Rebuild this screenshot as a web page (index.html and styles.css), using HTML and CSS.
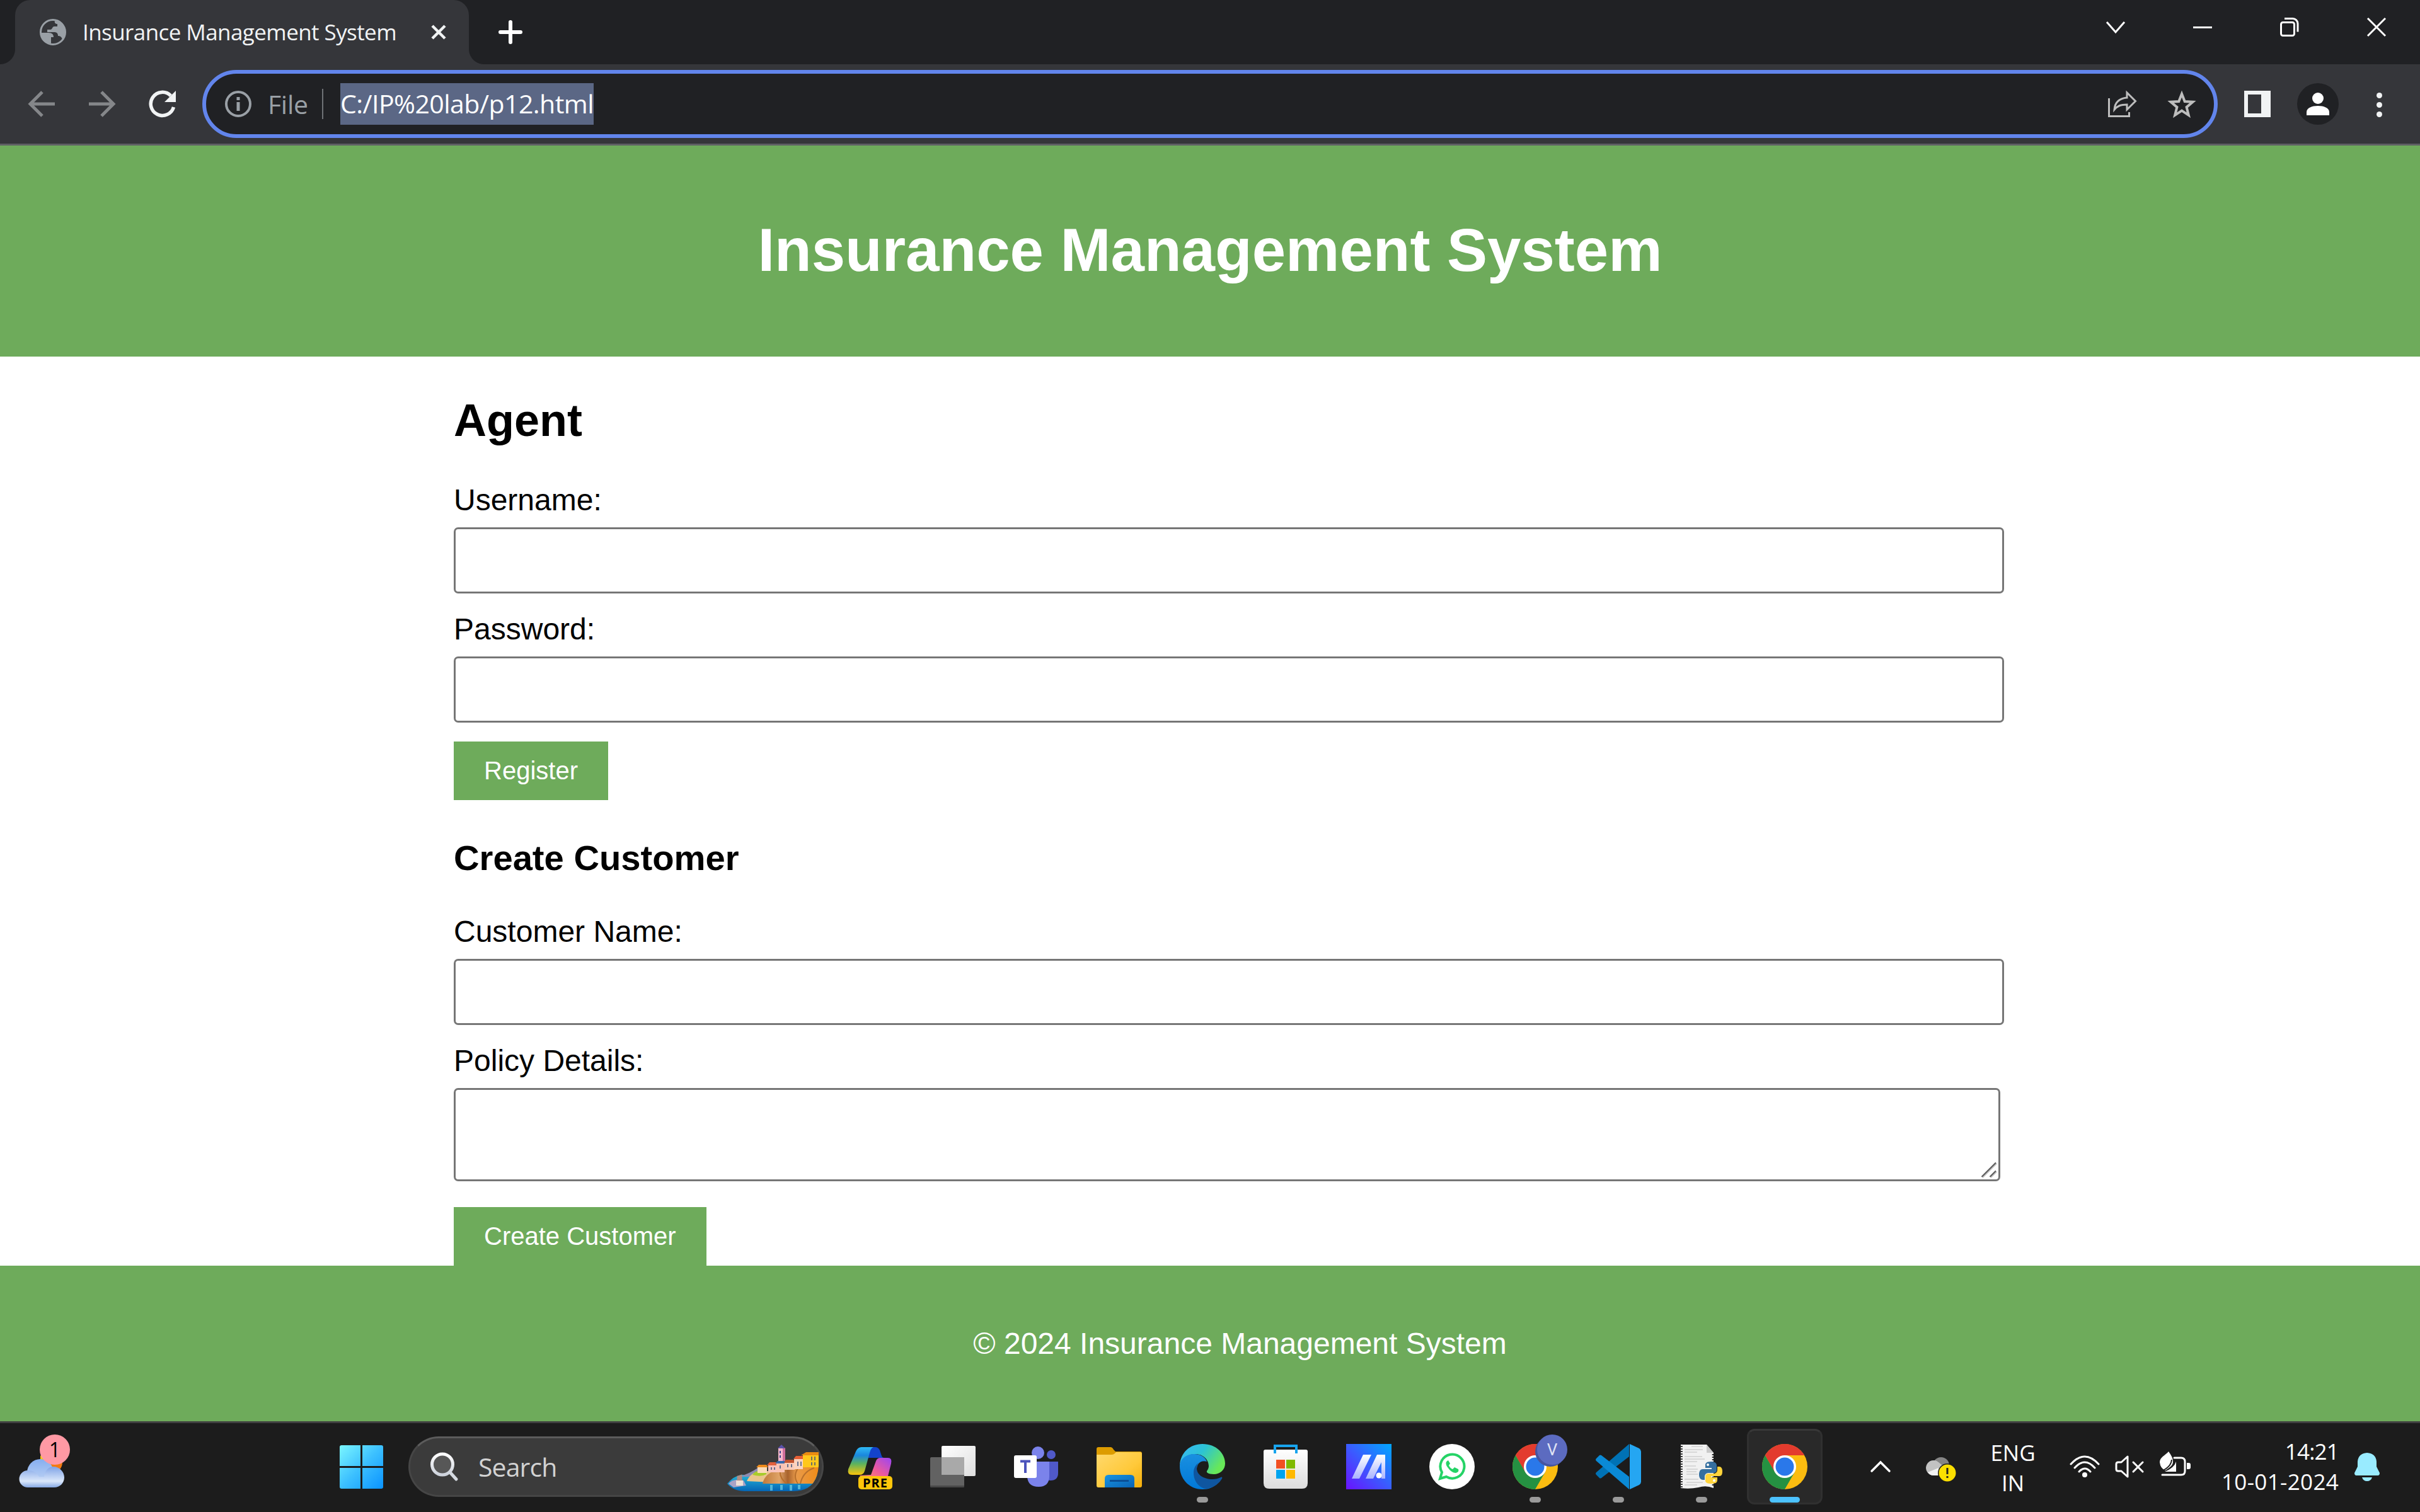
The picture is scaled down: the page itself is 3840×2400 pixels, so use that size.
FILE: index.html
```html
<!DOCTYPE html>
<html lang="en">
<head>
<meta charset="utf-8">
<title>Insurance Management System</title>
<link rel="stylesheet" href="styles.css">
</head>
<body>
<div class="screen">

  <div class="tabstrip">
    <div class="tab">
      <svg class="favicon" viewBox="0 0 42 42"><circle cx="21" cy="21" r="19.5" fill="#35363a" stroke="#9aa0a6" stroke-width="3"/><path d="M24 3C34 4 40 12 40 21c0 6-2 10-4 12-1-5-4-6-7-6 0-4-2-6-6-6H12v-4h5c3 0 3-5 6-5h5V8c-3 0-5-2-4-5z" fill="#9aa0a6"/><path d="M2 22h12c6 0 8 3 8 7h-4v10C8 38 2 31 2 22z" fill="#9aa0a6"/></svg>
      <span class="tab-title">Insurance Management System</span>
      <svg class="tab-close" viewBox="0 0 24 24"><path d="M2 2l20 20M22 2L2 22" stroke="#f1f3f4" stroke-width="4.500"/></svg>
    </div>
    <svg class="new-tab" viewBox="0 0 36 36"><path d="M18 2v32M2 18h32" stroke="#fff" stroke-width="6" stroke-linecap="round"/></svg>
    <div class="window-controls">
      <svg viewBox="0 0 30 30"><path d="M1 7l14 16L29 7" /></svg>
      <svg viewBox="0 0 30 30"><path d="M0 15.5h30"/></svg>
      <svg viewBox="0 0 30 30"><rect x="1.5" y="7.500" width="21" height="21" rx="3"/><path d="M7 1.500h13a8 8 0 0 1 8 8v13"/></svg>
      <svg viewBox="0 0 30 30"><path d="M1 1l28 28M29 1L1 29"/></svg>
    </div>
  </div>

  <div class="toolbar">
    <div class="nav">
      <svg viewBox="0 0 42 42"><path d="M42 21H4M22 2L3 21l19 19" stroke="#85878a" stroke-width="5"/></svg>
      <svg viewBox="0 0 42 42"><path d="M0 21h38M20 2l19 19-19 19" stroke="#85878a" stroke-width="5"/></svg>
      <svg viewBox="0 0 42 42"><path d="M38.500 26A18.500 18.500 0 1 1 34 8" stroke="#f1f3f4" stroke-width="5.500"/><path d="M42 0v18H24z" fill="#f1f3f4"/></svg>
    </div>
    <div class="omnibox">
      <svg class="info" viewBox="0 0 42 42"><circle cx="21" cy="21" r="19" stroke="#9aa0a6" stroke-width="4"/><path d="M21 18v14M21 10v5" stroke="#9aa0a6" stroke-width="5"/></svg>
      <span class="scheme">File</span>
      <span class="url">C:/IP%20lab/p12.html</span>
      <svg class="share" viewBox="0 0 45 42"><path d="M1.500 12v28.500h32V34" stroke="#bdbdbd" stroke-width="3"/><path d="M30 3l13.500 13.500L30 30v-8c-10 0-15 2-20 8 1-12 8-18 20-19z" stroke="#bdbdbd" stroke-width="3"/></svg>
      <svg class="star" viewBox="0 0 44 43"><path d="M22 5l4.700 12 12.800.8-9.900 8.300 3.200 12.700L22 31.700 11.200 38.800l3.200-12.700-9.900-8.300 12.800-.8z" stroke="#bdbdbd" stroke-width="4"/></svg>
    </div>
    <svg class="panel" viewBox="0 0 42 42"><path d="M0 0h42v42H0zM6 6v30h21V6z" fill="#f1f3f4" fill-rule="evenodd"/></svg>
    <svg class="profile" viewBox="0 0 66 66"><circle cx="33" cy="33" r="33" fill="#202124"/><circle cx="33" cy="24" r="9" fill="#fff"/><path d="M15 51v-5c0-7 9-10 18-10s18 3 18 10v5z" fill="#fff"/></svg>
    <svg class="dots" viewBox="0 0 45 42"><circle cx="22.500" cy="7.500" r="4.500" fill="#f1f3f4"/><circle cx="22.500" cy="22.500" r="4.500" fill="#f1f3f4"/><circle cx="22.500" cy="37.500" r="4.500" fill="#f1f3f4"/></svg>
  </div>

  <div class="page">
    <header><h1>Insurance Management System</h1></header>
    <main>
      <h2>Agent</h2>
      <form>
        <label for="username">Username:</label>
        <input id="username" type="text">
        <label for="password">Password:</label>
        <input id="password" type="password">
        <button type="button">Register</button>
      </form>
      <h3>Create Customer</h3>
      <form>
        <label for="customer">Customer Name:</label>
        <input id="customer" type="text">
        <label for="policy">Policy Details:</label>
        <div class="area">
          <textarea id="policy"></textarea>
          <svg class="grip" viewBox="0 0 26 26"><path d="M3 25L25 3M16 25l9-9" stroke="#c4c4c4" stroke-width="2"/><path d="M1.500 24L24 1.500M14.500 24l9.500-9.500" stroke="#5c5c5c" stroke-width="2.200"/></svg>
        </div>
        <button type="button">Create Customer</button>
      </form>
    </main>
    <footer>© 2024 Insurance Management System</footer>
  </div>

  <div class="taskbar">
    <div class="weather">
      <svg viewBox="0 0 72 84">
        <defs>
          <linearGradient id="cl1" x1="0" y1="0" x2="0" y2="1"><stop offset="0" stop-color="#86aef0"/><stop offset="1" stop-color="#c6d8f4"/></linearGradient>
          <linearGradient id="cl2" x1="0" y1="0" x2="0" y2="1"><stop offset="0" stop-color="#7fa3e6"/><stop offset=".7" stop-color="#dbe8fb"/><stop offset="1" stop-color="#86a8e4"/></linearGradient>
        </defs>
        <circle cx="51" cy="44" r="18" fill="#f37a10"/><path d="M34 45V34l8-8v22z" fill="#f5c518"/>
        <circle cx="34" cy="60" r="21" fill="url(#cl1)"/>
        <path d="M14 84a13.500 13.500 0 0 1 0-27c8 0 14 3 18 10h8c1-10 7-16 15-16 9 0 17 8 17 17s-7 16-16 16z" fill="url(#cl2)"/>
      </svg>
      <span class="badge">1</span>
    </div>

    <div class="apps">
      <div class="tile start">
        <svg viewBox="0 0 69 69"><defs><linearGradient id="win" gradientUnits="userSpaceOnUse" x1="0" y1="0" x2="69" y2="69"><stop offset="0" stop-color="#7bf6ff"/><stop offset=".5" stop-color="#3cc0ff"/><stop offset="1" stop-color="#0a93ff"/></linearGradient></defs><path fill="url(#win)" d="M3 0h30v33H0V3q0-3 3-3zM36 0h30q3 0 3 3v30H36zM0 36h33v33H3q-3 0-3-3zM36 36h33v30q0 3-3 3H36z"/></svg>
      </div>

      <div class="search">
        <svg class="lens" viewBox="0 0 44 45"><defs><linearGradient id="mg" x1="0" y1="0" x2="0" y2="1"><stop offset="0" stop-color="#fff"/><stop offset="1" stop-color="#ced3dc"/></linearGradient></defs><path d="M31 31l10 11" stroke="#d5dae1" stroke-width="5" stroke-linecap="round"/><circle cx="19" cy="18.500" r="16.500" fill="#575757" stroke="url(#mg)" stroke-width="5"/></svg>
        <span>Search</span>
        <svg class="scene" viewBox="0 0 145 74">
          <defs>
            <clipPath id="sc"><path d="M0 62Q10 50 22 48L60 20 80-2h50l15 14v22q-3 40-40 40H28Q10 74 0 62z"/></clipPath>
            <linearGradient id="sea" x1="0" y1="0" x2="0" y2="1"><stop offset="0" stop-color="#23b3d8"/><stop offset="1" stop-color="#0565b4"/></linearGradient>
            <linearGradient id="cliff" x1="0" y1="0" x2="1" y2="0"><stop offset="0" stop-color="#c07a3a"/><stop offset=".3" stop-color="#e0a468"/><stop offset=".45" stop-color="#a8622c"/><stop offset=".6" stop-color="#e89a4a"/><stop offset="1" stop-color="#f08c18"/></linearGradient>
          </defs>
          <g clip-path="url(#sc)">
            <path d="M0 48h145v26H0z" fill="url(#sea)"/>
            <path d="M18 51q16-4 32-15v15z" fill="#8d8bb0"/>
            <path d="M31 58q6-14 22-16h20v18z" fill="#eac58c"/>
            <path d="M40 48q4-7 12-6h10v5q-8 5-22 1z" fill="#a8cc2a"/>
            <path d="M56 62q4-18 26-22l28-4h35v26z" fill="url(#cliff)"/>
            <path d="M84 40q-2 12 10 22M112 38q-8 12 0 24M138 37q-18 6-22 25" stroke="#b8702c" stroke-width="2" fill="none"/>
            <path d="M2 62q8-9 24-5l4 8-20 3z" fill="#a9a3c6"/>
            <path d="M16 40h7l1 24h-9z" fill="#b08d84"/><path d="M14 57h11v8H14z" fill="#eee0d6"/><path d="M16 34h7v9h-7z" fill="#e9302c"/>
            <path d="M48 36h15v9H48z" fill="#fcdcb8"/><path d="M46 36l4-4h12l3 4z" fill="#ee8b1c"/>
            <path d="M65 33h14v11H65z" fill="#f8c3bd"/><path d="M63 33l4-5h12v5z" fill="#e2603c"/>
            <path d="M81 5h11v22H81z" fill="#f6b7cc"/><path d="M88 5h4v22h-4z" fill="#cf6d9c"/><path d="M80 6l6-6 6 6z" fill="#5a52a8"/><path d="M84 10v4M84 17v4" stroke="#384890" stroke-width="2"/>
            <path d="M78 30h13v14H78z" fill="#fbc3b5"/><path d="M76 30l4-4h13v4z" fill="#3769ad"/>
            <path d="M91 29h16v11H91z" fill="#fbcbb8"/><path d="M90 29l3-5h12l3 5z" fill="#c2542f"/>
            <path d="M106 23h14v16h-14z" fill="#fbd3c0"/><path d="M105 23l4-5h12v5z" fill="#e55e35"/>
            <path d="M120 16h25v20h-25z" fill="#ffc81c"/><path d="M117 17l8-5h20v5z" fill="#ea8c12"/>
            <path d="M84 33v5M96 31v5M102 31v5M112 27v7M117 27v7M134 19v6M139 19v6M134 28v5M139 28v5M70 36v4M75 36v4" stroke="#39537e" stroke-width="1.500"/>
            <path d="M70 64v9M86 64v8M101 64v9M114 64v7" stroke="#7fe0ee" stroke-width="4" opacity=".6"/>
          </g>
        </svg>
      </div>

      <div class="tile copilot">
        <svg viewBox="0 0 72 72">
          <defs>
            <linearGradient id="cp1" x1="0" y1="0" x2="0" y2="1"><stop offset="0" stop-color="#2fb9f5"/><stop offset=".3" stop-color="#1a87dd"/><stop offset=".6" stop-color="#5cb25e"/><stop offset="1" stop-color="#fac40a"/></linearGradient>
            <linearGradient id="cp2" x1="1" y1="0" x2="0" y2="1"><stop offset="0" stop-color="#9a45f5"/><stop offset=".5" stop-color="#ee5a9a"/><stop offset="1" stop-color="#ffa05a"/></linearGradient>
          </defs>
          <path d="M32 5h13q6 0 8 8l2 6q1 3 4 3H34z" fill="#1343cc"/>
          <path d="M38 49l8-22q2-5 7-5h12q7 0 5 9l-7 28H26l-6-9z" fill="url(#cp2)"/>
          <path d="M14 12q3-7 9-7h19q-4 1-6 9L28 43q-2 6-8 6H8q-8 0-6-9z" fill="url(#cp1)"/>
          <rect x="18" y="51" width="54" height="21" rx="5" fill="#ffc60a"/>
        </svg>
        <span class="pre">PRE</span>
      </div>
      <div class="tile">
        <svg viewBox="0 0 72 72"><defs><linearGradient id="tv" x1="0" y1="0" x2="1" y2="1"><stop offset="0" stop-color="#fff"/><stop offset="1" stop-color="#dedede"/></linearGradient></defs><rect x="18" y="3" width="54" height="48" rx="2" fill="url(#tv)"/><rect x="0" y="21" width="54" height="48" rx="2" fill="#626262"/><path d="M18 21h36v28H18z" fill="#a9a9a9"/><path d="M0 66h54v1q0 2-2 2H2q-2 0-2-2z" fill="#484848"/></svg>
      </div>
      <div class="tile">
        <svg viewBox="0 0 72 72"><circle cx="39" cy="14" r="10" fill="#7b83eb"/><circle cx="60" cy="17" r="7" fill="#5059c9"/><path d="M50 28h21v18q0 12-12 12-6 0-9-4z" fill="#5059c9"/><path d="M22 28h35v23q0 17-17 17T22 52z" fill="#7b83eb"/><rect x="1" y="18" width="36" height="36" rx="3" fill="#fff"/><path d="M11 27.500h16M19 27v19" stroke="#4b53bc" stroke-width="4" fill="none"/></svg>
      </div>
      <div class="tile">
        <svg viewBox="0 0 72 72"><defs><linearGradient id="fo" x1="0" y1="0" x2="1" y2="1"><stop offset="0" stop-color="#ffd96e"/><stop offset=".6" stop-color="#ffc93a"/><stop offset="1" stop-color="#f5ae0a"/></linearGradient><linearGradient id="fb" x1="0" y1="0" x2="1" y2="1"><stop offset="0" stop-color="#1795e2"/><stop offset="1" stop-color="#0a62b4"/></linearGradient></defs><path d="M0 8q0-3 3-3h19q3 0 5 4l3 3h39q3 0 3 3v10H0z" fill="#dd9c00"/><path d="M0 17h24q3 0 5-2l2-2h38q3 0 3 3v50q0 3-3 3H3q-3 0-3-3z" fill="url(#fo)"/><path d="M13 69V55q0-6 6-6h35q6 0 6 6v14z" fill="url(#fb)"/><path d="M21 58.500h30" stroke="#0a4f96" stroke-width="3"/></svg>
      </div>
      <div class="tile">
        <svg viewBox="0 0 72 72">
          <defs>
            <linearGradient id="e1" x1="0" y1="0" x2="1" y2=".5"><stop offset="0" stop-color="#38b6f8"/><stop offset=".5" stop-color="#2cc3d4"/><stop offset="1" stop-color="#68e858"/></linearGradient>
            <linearGradient id="e2" x1="0" y1="0" x2="0" y2="1"><stop offset="0" stop-color="#1a90e0"/><stop offset="1" stop-color="#0078d8"/></linearGradient>
          </defs>
          <path d="M0 34C1 14 16 0 36 0c22 0 36 15 36 31 0 10-8 17-18 17-9 0-12-3-11-5 2-3 3-5 3-8 0-10-9-19-21-19C13 16 3 22 0 34z" fill="url(#e1)"/>
          <path d="M0 36C0 24 10 16 23 16c11 0 18 6 20 12-10-3-16 4-16 12 0 18 16 27 34 21C54 69 46 72 36 72 14 72 0 54 0 36z" fill="url(#e2)"/>
          <path d="M30 30c-6 4-8 10-8 16 0 14 10 25 21 25 12-2 20-9 24-16 1-2 0-3-2-2-4 2-8 3-13 3-15 0-25-8-25-17 0-4 1-7 3-9z" fill="#0f56a0"/>
        </svg>
        <i class="running"></i>
      </div>
      <div class="tile">
        <svg viewBox="0 0 72 72"><defs><linearGradient id="st" x1="0" y1="0" x2="0" y2="1"><stop offset="0" stop-color="#fff"/><stop offset="1" stop-color="#dcdcdc"/></linearGradient></defs><path d="M4 9h64q3 0 3 3v50q0 9-9 9H10q-9 0-9-9V12q0-3 3-3z" fill="url(#st)"/><path d="M19 15V3h34v12" fill="none" stroke="#18a4ee" stroke-width="4"/><path d="M21 25h14v14H21z" fill="#f25022"/><path d="M37 25h14v14H37z" fill="#7fba00"/><path d="M21 41h14v14H21z" fill="#00a4ef"/><path d="M37 41h14v14H37z" fill="#ffb900"/></svg>
      </div>
      <div class="tile">
        <svg viewBox="0 0 72 72"><defs><linearGradient id="as" x1="0" y1="1" x2="1" y2="0"><stop offset="0" stop-color="#6a12ff"/><stop offset=".5" stop-color="#3a5cff"/><stop offset="1" stop-color="#00a8ff"/></linearGradient><linearGradient id="aw" x1="0" y1="0" x2="0" y2="1"><stop offset="0" stop-color="#fff"/><stop offset="1" stop-color="#aab4ff"/></linearGradient></defs><path d="M0 0h72v72H0z" fill="url(#as)"/><path d="M27 17h13L21 55H9zM49 17h13v38h-6V29L43 55H31z" fill="url(#aw)"/><circle cx="52" cy="50" r="4.500" fill="#fff"/></svg>
      </div>
      <div class="tile">
        <svg viewBox="0 0 72 72"><circle cx="36" cy="36" r="36" fill="#fff"/><path d="M17 55l3-10a19 19 0 1 1 7 7z" fill="none" stroke="#25d366" stroke-width="4"/><path d="M30 26c-5 2-4 7-1 11 4 6 9 9 13 9 4-1 5-3 4-6l-6-3-3 3c-3-1-5-4-6-6l2-3z" fill="#25d366"/></svg>
      </div>
      <div class="tile">
        <svg viewBox="0 0 72 72"><use href="#chrome"/></svg>
        <span class="avatar">V</span>
        <i class="running"></i>
      </div>
      <div class="tile">
        <svg viewBox="0 0 72 72"><path d="M53 0v20L9 54q-2 1-3 0l-5-5q-2-2 0-4z" fill="#0072b5"/><path d="M53 72V52L9 18q-2-1-3 0l-5 5q-2 2 0 4z" fill="#0a8ad6"/><path d="M54 0l15 7q3 2 3 5v48q0 3-3 5l-15 7z" fill="#25a6f2"/></svg>
        <i class="running"></i>
      </div>
      <div class="tile">
        <svg viewBox="0 0 72 72">
          <path d="M3 1h41l11 13v56q-12-5-24-1-14 3-28 1z" fill="#f1f1f1"/><path d="M44 1v13h11z" fill="#c9c9c9"/>
          <path d="M4.500 3v66M54 16v52" stroke="#222" stroke-width="2.500" stroke-dasharray="2 2"/>
          <path d="M20 4h18M9 9h29M9 13h20M9 20h28M9 24h32M9 28h20M9 35h18M12 40h18M12 44h16M12 48h18M9 56h22M12 61h26M9 65h20" stroke="#cfcfcf" stroke-width="1.500"/>
          <path d="M51 28c-8 0-9 3-9 6v4h10v2H38c-5 0-6 5-6 9s2 8 6 8h3v-5c0-4 3-6 6-6h8c3 0 5-2 5-5v-7c0-4-4-6-9-6z" fill="#356f9f"/>
          <path d="M52 63c8 0 9-3 9-6v-4H51v-2h13c5 0 5-5 5-8s-1-7-5-7h-3v5c0 4-3 6-6 6h-8c-3 0-5 2-5 5v6c0 4 4 5 10 5z" fill="#ffd43b"/>
          <circle cx="46" cy="33" r="2" fill="#fff"/><circle cx="56" cy="58" r="2" fill="#fff"/>
        </svg>
        <i class="running"></i>
      </div>
      <div class="tile active">
        <svg viewBox="0 0 72 72">
          <g id="chrome">
            <circle cx="36" cy="36" r="36" fill="#fbbc10"/>
            <path d="M4.800 18A36 36 0 0 1 67.200 18H36L20 45z" fill="#e33b2e"/>
            <path d="M4.800 18A36 36 0 0 0 36 72L51.600 45 36 40 20.400 45z" fill="#259142"/>
            <circle cx="36" cy="36" r="18" fill="#fff"/><circle cx="36" cy="36" r="14.500" fill="#2a78ea"/>
          </g>
        </svg>
        <i class="current"></i>
      </div>
    </div>

    <div class="tray">
      <svg class="more" viewBox="0 0 32 18"><path d="M2 16L16 2l14 14" stroke="#fff" stroke-width="3.500" stroke-linecap="round"/></svg>
      <svg class="drive" viewBox="0 0 48 40"><circle cx="24" cy="14" r="13" fill="#858585"/><path d="M12 30A12 12 0 1 1 20 9l10 8-8 13z" fill="#c2c2c2"/><path d="M3 25l17-7v12h-8q-6 0-9-5z" fill="#f2f2f2"/><circle cx="34" cy="26" r="15" fill="#1c1c1c"/><circle cx="34" cy="26" r="13.500" fill="#fbdf00"/><path d="M34 18v10M34 31v3" stroke="#222" stroke-width="3"/></svg>
      <div class="lang"><span>ENG</span><span>IN</span></div>
      <svg class="wifi" viewBox="0 0 48 36"><path d="M2 14Q24-10 46 14M8 20Q24 2 40 20M15 26q9-10 18 0" stroke="#fff" stroke-width="3" stroke-linecap="round"/><circle cx="24" cy="31" r="4" fill="#fff"/></svg>
      <svg class="sound" viewBox="0 0 46 36"><path d="M2 14q0-3 3-3h5L20 2v32L10 25H5q-3 0-3-3zM29 11l15 15M44 11L29 26" stroke="#fff" stroke-width="3" stroke-linejoin="round" stroke-linecap="round"/></svg>
      <svg class="battery" viewBox="0 0 49 40"><path d="M23 10h11q6 0 6 6v15q0 6-6 6H4" stroke="#fff" stroke-width="3" stroke-linecap="round"/><path d="M43 18h3q3 0 3 3v4q0 3-3 3h-3z" fill="#fff"/><path d="M14 0q6 8 7 14c1 8-5 11-12 16q-8-3-9-13C0 9 9 6 14 0z" fill="#fff"/><path d="M19 13q-1 12-18 19" stroke="#1c1c1c" stroke-width="2"/><path d="M26 16v16H8q15-6 18-16z" fill="#fff"/></svg>
      <div class="clock"><span class="time">14:21</span><span class="date">10-01-2024</span></div>
      <svg class="bell" viewBox="0 0 40 45"><path d="M20 0q14 1 15 14v8l5 10q0 4-3 4H3q-3 0-3-4l5-10v-8Q6 1 20 0zM12 39h16q-2 6-8 6t-8-6z" fill="#99ebff"/></svg>
    </div>
  </div>
</div>
</body>
</html>
```
FILE: styles.css
```css
* { box-sizing: border-box; }
body { margin: 0; background: #fff; }
svg { display: block; flex: none; fill: none; overflow: visible; }
.screen {
  width: 3840px; height: 2400px; display: flex; flex-direction: column; overflow: hidden;
  font-family: "Open Sans", "Noto Sans", sans-serif;
}

/* tab strip */
.tabstrip { height: 102px; background: #202124; display: flex; align-items: center; padding-left: 24px; }
.tab {
  position: relative; width: 720px; height: 102px; background: #35363a; border-radius: 24px 24px 0 0;
  display: flex; align-items: center; padding: 0 36px 0 39px;
}
.tab::before, .tab::after { content: ""; position: absolute; bottom: 0; width: 24px; height: 24px; }
.tab::before { left: -24px; background: radial-gradient(circle at 0 0, transparent 23.5px, #35363a 24.5px); }
.tab::after { right: -24px; background: radial-gradient(circle at 100% 0, transparent 23.5px, #35363a 24.5px); }
.favicon { width: 42px; height: 42px; }
.tab-title { margin-left: 26px; flex: 1; color: #f1f3f4; font-size: 35px; letter-spacing: -0.58px; line-height: 48px; padding-bottom: 1px; white-space: nowrap; }
.tab-close { width: 24px; height: 24px; }
.new-tab { width: 36px; height: 36px; margin-left: 48px; }
.window-controls { margin-left: auto; align-self: flex-start; height: 86px; display: grid; grid-template-columns: repeat(4, 138px); align-items: center; justify-items: center; }
.window-controls svg { width: 30px; height: 30px; stroke: #fff; stroke-width: 3; }

/* toolbar */
.toolbar { height: 129px; background: #35363a; border-bottom: 3px solid #5f6064; display: flex; align-items: center; padding: 0 42px 0 45px; gap: 42px; }
.nav { display: flex; gap: 54px; }
.nav svg, .panel, .info { width: 42px; height: 42px; }
.omnibox { flex: 1; height: 108px; border: 6px solid #6285ec; border-radius: 54px; background: #202124; display: flex; align-items: center; padding: 0 29px 0 30px; font-size: 41px; line-height: 65px; }
.scheme { margin-left: 26px; width: 86px; color: #9aa0a6; letter-spacing: -0.3px; }
.url { position: relative; margin-left: 29px; width: 402px; height: 66px; background: #5b6785; color: #fff; letter-spacing: -0.53px; white-space: nowrap; }
.url::before { content: ""; position: absolute; left: -29px; top: 9px; width: 2px; height: 48px; background: #6f7276; }
.share { width: 45px; height: 42px; margin-left: auto; }
.star { width: 44px; height: 43px; margin-left: 50px; }
.profile { width: 66px; height: 66px; }
.dots { width: 45px; height: 42px; }

/* page */
.page { height: 2025px; background: #fff; font-family: "Liberation Sans", Arial, sans-serif; font-size: 48px; line-height: 55px; color: #000; }
header { height: 335px; padding: 112px 0; background: #6eab5b; color: #fff; text-align: center; }
h1 { margin: 0; font-size: 96px; line-height: 108px; }
main { width: 2460px; height: 1443px; margin-left: 720px; padding-top: 61px; }
h2 { margin: 0 0 58px; height: 83px; font-size: 72px; line-height: 80px; }
h3 { margin: 61px 0 57px; height: 65px; font-size: 56.16px; line-height: 62px; }
label { display: block; height: 55px; line-height: 52px; margin-bottom: 14px; }
input, textarea { display: block; border: 3px solid #767676; border-radius: 7px; background: #fff; outline: 0; padding: 24px; margin: 0; }
input { width: 2460px; height: 105px; margin-bottom: 31px; }
#password { margin-bottom: 30px; }
.area { position: relative; width: 2454px; height: 148px; margin-bottom: 41px; }
textarea { width: 100%; height: 100%; resize: none; }
.grip { position: absolute; right: 5px; bottom: 5px; width: 26px; height: 26px; }
button { display: block; height: 93px; border: 0; padding: 0 48px 1px; background: #6eab5b; color: #fff; font: 40px/46px "Liberation Sans", Arial, sans-serif; }
footer { height: 247px; padding: 96px 0 0 95px; background: #6eab5b; color: #fff; text-align: center; }

/* taskbar */
.taskbar { height: 144px; background: #1c1c1c; box-shadow: inset 0 3px #404040; display: flex; align-items: center; color: #fff; }
.weather { position: relative; width: 81px; height: 84px; margin-left: 30px; }
.weather svg { width: 72px; height: 84px; margin-top: -9px; }
.badge { position: absolute; left: 33px; top: -9px; width: 48px; height: 48px; border-radius: 50%; background: #ff99a4; color: #000; font-size: 32px; line-height: 48px; text-align: center; }
.apps { display: flex; align-items: center; gap: 12px; margin-left: 402px; }
.tile { position: relative; width: 120px; height: 120px; border-radius: 12px; display: flex; align-items: center; justify-content: center; }
.tile svg { width: 72px; height: 72px; }
.start svg { width: 69px; height: 69px; }
.start { margin-right: 3px; }
.active { background: #292929; border: 3px solid #303030; border-top-color: #383838; }
.running, .current { position: absolute; bottom: 3px; height: 9px; border-radius: 5px; }
.running { left: 51px; width: 18px; background: #9a9a9a; }
.current { left: 33px; bottom: 0; width: 48px; background: #4cc2ff; }
.pre { position: absolute; left: 42px; top: 75px; width: 54px; height: 21px; font: bold 20px/21px "Open Sans", sans-serif; letter-spacing: 1px; color: #000; text-align: center; }
.avatar { position: absolute; left: 63px; top: 9px; width: 48px; height: 48px; border-radius: 50%; background: #5c6bc0; color: #dfe2f4; font: 26px/48px Roboto, sans-serif; text-align: center; box-shadow: -3px 3px 0 #4655a0; }
.search { width: 659px; height: 96px; border: 3px solid #464646; border-top-color: #5c5c5c; border-radius: 48px; background: #3b3b3b; display: flex; align-items: center; padding: 0 5px 0 32px; margin-right: 1px; font-size: 41px; letter-spacing: -0.9px; color: #d2d2d2; }
.lens { width: 44px; height: 45px; }
.search span { margin-left: 32px; }
.scene { width: 145px; height: 74px; margin: 4px 0 0 auto; }

.tray { flex: 1; display: flex; align-items: center; padding-right: 64px; font-size: 35px; line-height: 48px; }
.more { width: 32px; height: 18px; margin-left: 76px; }
.drive { width: 48px; height: 40px; margin-left: 56px; margin-top: 8px; }
.lang { width: 74px; margin-left: 53px; display: flex; flex-direction: column; text-align: center; margin-top: 4px; }
.wifi { width: 48px; height: 36px; margin-left: 53px; }
.sound { width: 46px; height: 36px; margin-left: 24px; }
.battery { width: 49px; height: 40px; margin: -8px 0 0 25px; }
.clock { width: 186px; margin-left: auto; display: flex; flex-direction: column; text-align: right; white-space: nowrap; }
.time { letter-spacing: -0.8px; }
.date { letter-spacing: 0.35px; }
.bell { width: 40px; height: 45px; margin-left: 25px; }
```
